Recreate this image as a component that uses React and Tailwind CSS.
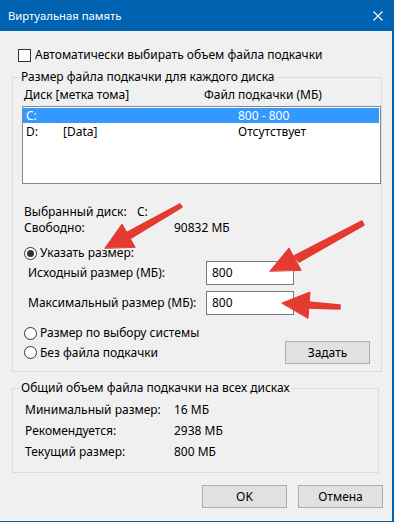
import React from "react";

const Radio = ({ checked }) => (
  <span className="w-[13px] h-[13px] rounded-full border border-[#333333] bg-white flex items-center justify-center shrink-0">
    {checked && <span className="w-[7px] h-[7px] rounded-full bg-[#333333]" />}
  </span>
);

const WinButton = ({ children, className = "" }) => (
  <button className={"h-[23px] bg-[#e1e1e1] border border-[#adadad] text-black flex items-center justify-center " + className}>
    {children}
  </button>
);

const Arrows = () => (
  <svg className="absolute inset-0 pointer-events-none" width="394" height="522" viewBox="0 0 394 522">
    <g fill="#e53a2f" stroke="#e53a2f" strokeLinejoin="round" strokeLinecap="round">
      <polygon points="180,204 182,207 131,238 126,233" strokeWidth="1.5" />
      <polygon points="105,248 122,224 135,247" strokeWidth="1" />
      <polygon points="362,221 364,225 299,262 294,256" strokeWidth="1.5" />
      <polygon points="270,271 289,248 301,270" strokeWidth="1" />
      <polygon points="340,305 340,309 308,308 308,302" strokeWidth="1.5" />
      <polygon points="282,303 310,292 308,318" strokeWidth="1" />
    </g>
  </svg>
);

export default function App() {
  return (
    <div className="relative w-[394px] h-[522px] overflow-hidden bg-[#f0f0f0] border-r-2 border-b border-[#0063b1] font-['Noto_Sans','Liberation_Sans',sans-serif] text-[12px] leading-[16px] text-black">
      {/* title bar */}
      <div className="h-[31px] bg-[#0063b1] flex items-center justify-between pl-[8px] pr-[9px] text-white">
        <span className="text-[11.3px]">Виртуальная память</span>
        <svg width="10" height="10" viewBox="0 0 10 10">
          <path d="M0.5 0.5 L9.5 9.5 M9.5 0.5 L0.5 9.5" stroke="white" strokeWidth="1.1" />
        </svg>
      </div>

      <div className="pl-[12px] pr-[13px]">
        <label className="flex items-center gap-[4px] mt-[16px] h-[16px] pl-[6px]">
          <span className="w-[13px] h-[13px] border border-[#333333] bg-white shrink-0" />
          <span>Автоматически выбирать объем файла подкачки</span>
        </label>

        {/* per-disk group */}
        <fieldset className="mt-[6px] border border-[#dcdcdc] pb-[7px]">
          <legend className="ml-[7px] px-[1px]">Размер файла подкачки для каждого диска</legend>
          <div className="pl-[11px]">
            <div className="flex mt-[2px]">
              <span className="w-[180px]">Диск [метка тома]</span>
              <span>Файл подкачки (МБ)</span>
            </div>
            <div className="mt-[3px] -ml-[2px] w-[359px] h-[78px] border border-[#828790] bg-white pt-[1px]">
              <div className="flex h-[15px] items-center bg-[#3399ff] text-white pl-[3px] mr-[1px]">
                <span className="w-[37px]">C:</span>
                <span className="w-[175px]"></span>
                <span>800 - 800</span>
              </div>
              <div className="flex h-[17px] items-center pl-[3px]">
                <span className="w-[37px]">D:</span>
                <span className="w-[175px]">[Data]</span>
                <span>Отсутствует</span>
              </div>
            </div>

            <div className="flex mt-[20px]">
              <span className="w-[113px]">Выбранный диск:</span>
              <span>C:</span>
            </div>
            <div className="flex">
              <span className="w-[150px]">Свободно:</span>
              <span>90832 МБ</span>
            </div>

            <label className="flex items-center gap-[3px] mt-[9px] h-[16px]">
              <Radio checked />
              <span>Указать размер:</span>
            </label>
            <div className="flex items-center h-[24px] pl-[4px]">
              <span className="w-[178px]">Исходный размер (МБ):</span>
              <span className="w-[88px] h-[24px] border border-[#7a7a7a] bg-white pl-[5px] flex items-center">800</span>
            </div>
            <div className="flex items-center h-[24px] pl-[4px] mt-[6px]">
              <span className="w-[178px]">Максимальный размер (МБ):</span>
              <span className="w-[88px] h-[24px] border border-[#7a7a7a] bg-white pl-[5px] flex items-center">800</span>
            </div>

            <label className="flex items-center gap-[3px] mt-[10px] h-[16px]">
              <Radio />
              <span>Размер по выбору системы</span>
            </label>
            <div className="flex items-center justify-between h-[23px] pr-[11px]">
              <label className="flex items-center gap-[3px]">
                <Radio />
                <span>Без файла подкачки</span>
              </label>
              <WinButton className="w-[85px]">Задать</WinButton>
            </div>
          </div>
        </fieldset>

        {/* totals group */}
        <fieldset className="mt-[8px] border border-[#dcdcdc] pb-[10px]">
          <legend className="ml-[7px] px-[1px]">Общий объем файла подкачки на всех дисках</legend>
          <div className="pl-[12px] mt-[3px]">
            {[
              ["Минимальный размер:", "16 МБ"],
              ["Рекомендуется:", "2938 МБ"],
              ["Текущий размер:", "800 МБ"],
            ].map(([k, v]) => (
              <div key={k} className="flex items-center h-[21px]">
                <span className="w-[149px]">{k}</span>
                <span>{v}</span>
              </div>
            ))}
          </div>
        </fieldset>
      </div>

      <div className="flex justify-end gap-[11px] mt-[12px] pr-[9px]">
        <WinButton className="w-[85px]">OK</WinButton>
        <WinButton className="w-[85px]">Отмена</WinButton>
      </div>

      <Arrows />
    </div>
  );
}
